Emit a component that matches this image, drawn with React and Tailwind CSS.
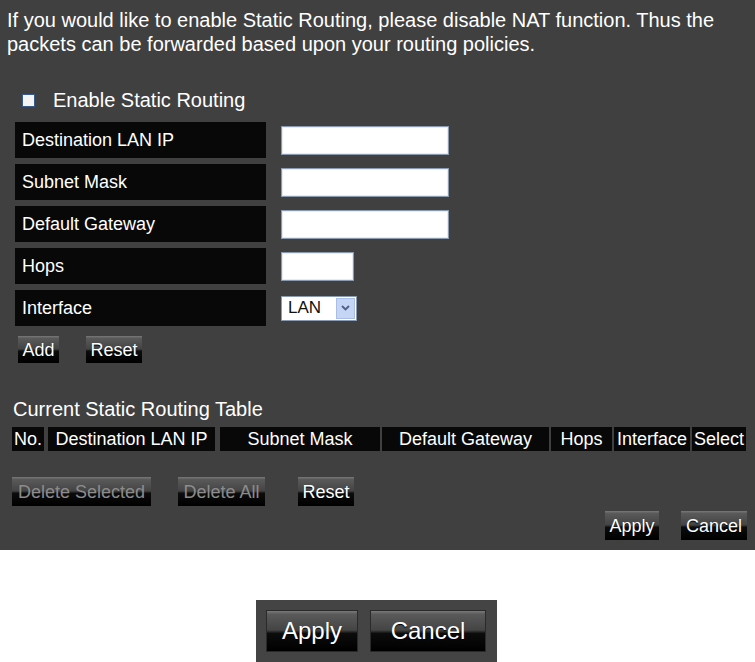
import React from "react";

const btn =
  "bg-[linear-gradient(#7a7a7a_0%,#5a5a5a_8%,#444_48%,#0c0c0c_56%,#000_100%)] text-white [text-shadow:0_1px_1px_#000] leading-none flex items-center justify-center whitespace-nowrap";

const Label = ({ children }) => (
  <div className="w-[251px] h-[36px] bg-[#080808] text-white text-[18px] flex items-center pl-[7px]">
    {children}
  </div>
);

const TextBox = ({ w }) => (
  <div className={`${w} h-[29px] bg-white border border-[#8a9bb0] shadow-[inset_0_0_0_1px_#e6ecf4]`} />
);

const cols = [
  { t: "No.", w: "w-[32px]", ml: "ml-0" },
  { t: "Destination LAN IP", w: "w-[167px]", ml: "ml-[4px]" },
  { t: "Subnet Mask", w: "w-[160px]", ml: "ml-[5px]" },
  { t: "Default Gateway", w: "w-[167px]", ml: "ml-[2px]" },
  { t: "Hops", w: "w-[61px]", ml: "ml-[2px]" },
  { t: "Interface", w: "w-[76px]", ml: "ml-[2px]" },
  { t: "Select", w: "w-[54px]", ml: "ml-[2px]" },
];

export default function App() {
  return (
    <div className="w-[755px] h-[662px] bg-white font-['Liberation_Sans',Arial,sans-serif] overflow-hidden">
      <div className="h-[550px] bg-[#404040] relative">
        <p className="text-white text-[20px] leading-[24px] pt-[8px] pl-[7px] w-[740px]">
          If you would like to enable Static Routing, please disable NAT function. Thus the packets can be forwarded based upon your routing policies.
        </p>

        <div className="flex items-center mt-[32px] ml-[22px] h-[24px]">
          <div className="w-[13px] h-[13px] bg-[#f4f4f4] border border-[#3b5a8c]" />
          <span className="ml-[18px] text-white text-[20px]">Enable Static Routing</span>
        </div>

        <div className="mt-[10px] ml-[15px] flex flex-col gap-[6px]">
          <div className="flex items-center">
            <Label>Destination LAN IP</Label>
            <div className="ml-[15px]"><TextBox w="w-[168px]" /></div>
          </div>
          <div className="flex items-center">
            <Label>Subnet Mask</Label>
            <div className="ml-[15px]"><TextBox w="w-[168px]" /></div>
          </div>
          <div className="flex items-center">
            <Label>Default Gateway</Label>
            <div className="ml-[15px]"><TextBox w="w-[168px]" /></div>
          </div>
          <div className="flex items-center">
            <Label>Hops</Label>
            <div className="ml-[15px]"><TextBox w="w-[73px]" /></div>
          </div>
          <div className="flex items-center">
            <Label>Interface</Label>
            <div className="ml-[15px] w-[76px] h-[25px] bg-white border border-[#8a9bb0] flex items-center">
              <span className="text-[17px] text-[#111] pl-[6px] flex-1">LAN</span>
              <div className="w-[19px] h-[21px] mr-[1px] bg-[#c5d5f5] border border-[#a9bde6] flex items-center justify-center">
                <svg width="9" height="6" viewBox="0 0 9 6">
                  <path d="M1 1 L4.5 4.5 L8 1" fill="none" stroke="#4d6185" strokeWidth="1.8" />
                </svg>
              </div>
            </div>
          </div>
        </div>

        <div className="flex mt-[10px] ml-[18px] h-[27px]">
          <div className={`${btn} w-[41px] h-[27px] text-[18px]`}>Add</div>
          <div className={`${btn} w-[56px] h-[27px] text-[18px] ml-[27px]`}>Reset</div>
        </div>

        <div className="mt-[35px] ml-[13px] text-white text-[20px] leading-[23px]">
          Current Static Routing Table
        </div>

        <div className="flex mt-[6px] ml-[12px] h-[24px]">
          {cols.map((c) => (
            <div
              key={c.t}
              className={`${c.w} ${c.ml} h-[24px] bg-[#080808] text-white text-[18px] flex items-center justify-center whitespace-nowrap`}
            >
              {c.t}
            </div>
          ))}
        </div>

        <div className="flex mt-[26px] ml-[12px]">
          <div className={`${btn} w-[139px] h-[29px] text-[18px] !text-[#8c8c8c] [text-shadow:none]`}>Delete Selected</div>
          <div className={`${btn} w-[87px] h-[29px] text-[18px] ml-[27px] !text-[#8c8c8c] [text-shadow:none]`}>Delete All</div>
          <div className={`${btn} w-[56px] h-[29px] text-[18px] ml-[33px]`}>Reset</div>
        </div>

        <div className="flex justify-end mt-[5px] mr-[8px]">
          <div className={`${btn} w-[54px] h-[29px] text-[18px]`}>Apply</div>
          <div className={`${btn} w-[66px] h-[29px] text-[18px] ml-[22px]`}>Cancel</div>
        </div>
      </div>

      <div className="mt-[50px] ml-[256px] w-[241px] h-[62px] bg-[#444] flex items-start pt-[10px] pl-[10px] gap-[12px]">
        <div className={`${btn} w-[92px] h-[42px] text-[24px] border border-[#2a2a2a]`}>Apply</div>
        <div className={`${btn} w-[116px] h-[42px] text-[24px] border border-[#2a2a2a]`}>Cancel</div>
      </div>
    </div>
  );
}
